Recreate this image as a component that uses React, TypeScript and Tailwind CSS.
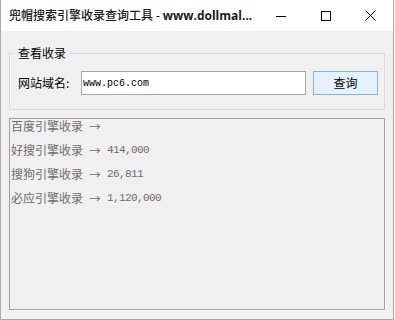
import React from "react";

const cjk = { fontFamily: '"Noto Sans CJK SC", "Noto Sans", sans-serif' };
const mono = { fontFamily: '"Liberation Mono", "DejaVu Sans Mono", monospace' };

function Row({ name, value }: { name: string; value?: string }) {
  return (
    <div className="flex h-[12px] items-center text-[#6d6d6d]">
      <span className="text-[12px] leading-[12px]" style={cjk}>{name}</span>
      <span className="w-[6px]" />
      <span className="w-[12px] text-center text-[11px] leading-[12px]" style={cjk}>→</span>
      <span className="w-[6px]" />
      {value && (
        <span className="text-[11px] leading-[12px] tracking-[-0.6px]" style={mono}>{value}</span>
      )}
    </div>
  );
}

export default function App() {
  return (
    <div className="w-[394px] h-[320px] bg-[#f0f0f0] border-l border-r border-b border-[#a9a9a9] flex flex-col">
      <div className="h-[31px] bg-white flex items-center shrink-0">
        <div className="flex-1 pl-[8px] text-[12px] text-[#1a1a1a] whitespace-nowrap" style={cjk}>
          <span className="font-medium">兜帽搜索引擎收录查询工具 - </span>
          <span className="font-bold" style={{ fontFamily: '"Open Sans", "Liberation Sans", sans-serif' }}>www.dollmal...</span>
        </div>
        <div className="w-[45px] h-full flex items-center justify-center">
          <svg width="10" height="10" viewBox="0 0 10 10"><line x1="0" y1="5.5" x2="10" y2="5.5" stroke="#000" strokeWidth="1" /></svg>
        </div>
        <div className="w-[45px] h-full flex items-center justify-center">
          <svg width="10" height="10" viewBox="0 0 10 10"><rect x="0.5" y="0.5" width="9" height="9" fill="none" stroke="#000" strokeWidth="1" /></svg>
        </div>
        <div className="w-[45px] h-full flex items-center justify-center">
          <svg width="11" height="11" viewBox="0 0 11 11"><path d="M0.5 0.5 L10.5 10.5 M10.5 0.5 L0.5 10.5" stroke="#000" strokeWidth="1" fill="none" /></svg>
        </div>
      </div>

      <div className="relative mt-[22px] ml-[8px] w-[376px] h-[57px] border border-[#dcdcdc] flex items-end pb-[14px] pl-[8px]">
        <div className="absolute left-[5px] top-[-8px] px-[3px] bg-[#f0f0f0] text-[12px] leading-[14px] text-black" style={cjk}>查看收录</div>
        <div className="flex items-center">
          <span className="w-[63px] text-[12px] text-black" style={cjk}>网站域名:</span>
          <div className="w-[225px] h-[24px] bg-white border border-[#a8a8a8] flex items-center pl-[1px]">
            <span className="text-[10px] text-black" style={mono}>www.pc6.com</span>
          </div>
          <div className="ml-[7px] w-[65px] h-[24px] bg-[#e5f1fb] border border-[#7eb4ea] flex items-center justify-center text-[12px] text-black" style={cjk}>
            查询
          </div>
        </div>
      </div>

      <div className="mt-[8px] ml-[8px] w-[376px] h-[192px] border border-[#a0a0a0] shadow-[1px_1px_0_#ffffff] pt-[1px] pl-[1px] flex flex-col gap-[12px]">
        <Row name="百度引擎收录" />
        <Row name="好搜引擎收录" value="414,000" />
        <Row name="搜狗引擎收录" value="26,811" />
        <Row name="必应引擎收录" value="1,120,000" />
      </div>
    </div>
  );
}
